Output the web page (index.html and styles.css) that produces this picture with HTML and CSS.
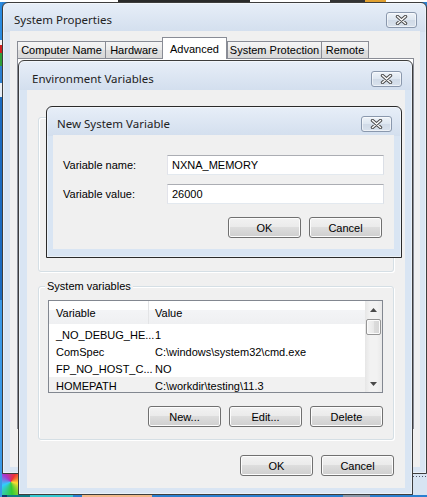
FILE: index.html
```html
<!DOCTYPE html>
<html>
<head>
<meta charset="utf-8">
<title>System Properties</title>
<link rel="stylesheet" href="styles.css">
</head>
<body>
<div class="desktop">

  <div class="win sp">
    <div class="titlebar">
      <span class="title">System Properties</span>
      <span class="close"><svg width="13" height="10" viewBox="0 0 13 10"><path d="M2.5 1.5 L10.5 8.5 M10.5 1.5 L2.5 8.5" stroke="#4a4a4a" stroke-width="3.4" stroke-linecap="round"/><path d="M2.5 1.5 L10.5 8.5 M10.5 1.5 L2.5 8.5" stroke="#fafafa" stroke-width="1.5" stroke-linecap="round"/></svg></span>
    </div>
    <div class="client sp-client">
      <div class="tabs">
        <div class="tab t1">Computer Name</div>
        <div class="tab t2">Hardware</div>
        <div class="tab t3">Advanced</div>
        <div class="tab t4">System Protection</div>
        <div class="tab t5">Remote</div>
      </div>
      <div class="tabpanel"></div>
    </div>
  </div>

  <div class="win ev">
    <div class="titlebar">
      <span class="title">Environment Variables</span>
      <span class="close"><svg width="13" height="10" viewBox="0 0 13 10"><path d="M2.5 1.5 L10.5 8.5 M10.5 1.5 L2.5 8.5" stroke="#4a4a4a" stroke-width="3.4" stroke-linecap="round"/><path d="M2.5 1.5 L10.5 8.5 M10.5 1.5 L2.5 8.5" stroke="#fafafa" stroke-width="1.5" stroke-linecap="round"/></svg></span>
    </div>
    <div class="client ev-client">
      <div class="group user-group"></div>
      <div class="group sys-group">
        <div class="group-label">System variables</div>
        <div class="listview">
          <div class="lv-main">
            <div class="lv-header">
              <div class="c1">Variable</div>
              <div class="c2 hsep">Value</div>
            </div>
            <div class="lv-rows">
              <div class="row"><div class="c1">_NO_DEBUG_HE...</div><div class="c2">1</div></div>
              <div class="row"><div class="c1">ComSpec</div><div class="c2">C:\windows\system32\cmd.exe</div></div>
              <div class="row"><div class="c1">FP_NO_HOST_C...</div><div class="c2">NO</div></div>
              <div class="row hot"><div class="c1">HOMEPATH</div><div class="c2">C:\workdir\testing\11.3</div></div>
            </div>
          </div>
          <div class="vscroll">
            <div class="sb-btn"><svg width="7" height="4" viewBox="0 0 7 4"><path d="M0 4 L3.5 0 L7 4Z" fill="#4a4a4a"/></svg></div>
            <div class="sb-thumb"></div>
            <div class="sb-track"></div>
            <div class="sb-btn"><svg width="7" height="4" viewBox="0 0 7 4"><path d="M0 0 L3.5 4 L7 0Z" fill="#4a4a4a"/></svg></div>
          </div>
        </div>
        <div class="btnrow sys-btns">
          <div class="btn">New...</div>
          <div class="btn">Edit...</div>
          <div class="btn">Delete</div>
        </div>
      </div>
      <div class="btnrow dlg-btns">
        <div class="btn">OK</div>
        <div class="btn">Cancel</div>
      </div>
    </div>
  </div>

  <div class="win nsv">
    <div class="titlebar">
      <span class="title">New System Variable</span>
      <span class="close"><svg width="13" height="10" viewBox="0 0 13 10"><path d="M2.5 1.5 L10.5 8.5 M10.5 1.5 L2.5 8.5" stroke="#4a4a4a" stroke-width="3.4" stroke-linecap="round"/><path d="M2.5 1.5 L10.5 8.5 M10.5 1.5 L2.5 8.5" stroke="#fafafa" stroke-width="1.5" stroke-linecap="round"/></svg></span>
    </div>
    <div class="client nsv-client">
      <div class="field"><span class="flabel">Variable name:</span><div class="input">NXNA_MEMORY</div></div>
      <div class="field"><span class="flabel">Variable value:</span><div class="input">26000</div></div>
      <div class="btnrow nsv-btns">
        <div class="btn">OK</div>
        <div class="btn">Cancel</div>
      </div>
    </div>
  </div>

</div>
</body>
</html>
```

FILE: styles.css
```css
* { box-sizing: border-box; }

body { margin: 0; }

.desktop {
  position: relative;
  width: 427px;
  height: 497px;
  overflow: hidden;
  font-family: "Liberation Sans", Arial, sans-serif;
  font-size: 11px;
  color: #000;
  background:
    linear-gradient(90deg, #fff 0 118px, #2a2a2a 118px 250px, #fff 250px 330px, #333 330px 365px, #e0a030 365px 386px, #fff 386px) 0 0 / 427px 2px no-repeat,
    linear-gradient(#2a8be0 0 40px, #f4f4f4 40px 45px, #d02020 45px 53px, #2e9e3a 53px 66px, #2a7fd0 66px 83px, #e8eef5 83px 97px, #1b6bc0 97px 300px, #3b9ae8 300px 470px) 0 0 / 2px 497px no-repeat,
    linear-gradient(90deg, #15356a 0 7px, #0e7b86 7px 30px, #35c9d2 30px 73px, #2a80d0 73px 82px, #f2b98a 82px 152px, #2a80d0 152px 343px, #8899aa 343px 370px, #2a80d0 370px) 0 495px / 427px 2px no-repeat,
    conic-gradient(from 30deg at 60% 40%, #e33, #fd3, #3c3, #3cf, #a3c, #e33) 0 473px / 18px 22px no-repeat,
    repeating-linear-gradient(90deg, #556 0 1px, transparent 1px 3px) 413px 476px / 14px 1px no-repeat,
    linear-gradient(#d7e4f2, #d7e4f2) 413px 473px / 14px 24px no-repeat,
    #2a80d0;
}

/* windows */
.win {
  position: absolute;
  display: flex;
  flex-direction: column;
  border: 1px solid #3d3d3d;
  border-radius: 6px 6px 0 0;
  background: linear-gradient(to bottom, #e7eef8 0px, #d3dfee 29px, #d9e5f3 29px, #d9e5f3 100%);
  box-shadow: inset 0 0 0 1px rgba(255, 255, 255, 0.45);
}

.sp { left: 2px; top: 2px; width: 425px; height: 472px; padding: 0 6px 6px 7px; }
.ev { left: 18px; top: 60px; width: 395px; height: 435px; padding: 0 7px 6px 8px; }
.nsv { left: 46px; top: 106px; width: 356px; height: 152px; padding: 0 7px 8px 6px; border-color: #2a2a2a; }

.titlebar {
  flex: none;
  display: flex;
  justify-content: space-between;
  align-items: center;
}
.sp .titlebar { height: 28px; padding: 6px 3px 0 4px; }
.ev .titlebar { height: 29px; padding: 7px 3px 0 5px; }
.nsv .titlebar { height: 28px; padding: 6px 2px 0 4px; }

.title {
  font-family: "Noto Sans", "Open Sans", sans-serif;
  font-size: 11.5px;
  line-height: 16px;
  color: #222;
}

.close {
  width: 31px;
  height: 16px;
  border: 1px solid #8a98ad;
  border-radius: 3px;
  background: linear-gradient(#eef3f9, #dde6f0 50%, #d0dae7 51%, #d9e2ed);
  box-shadow: inset 0 0 0 1px rgba(255, 255, 255, 0.55);
  display: flex;
  align-items: center;
  justify-content: center;
}

.client {
  flex: 1;
  min-height: 0;
  background: #f0f0f0;
}

/* System Properties */
.sp-client {
  padding: 6px 6px 0 7px;
  display: flex;
  flex-direction: column;
}

.tabs {
  display: flex;
  align-items: flex-end;
  height: 21px;
  flex: none;
}

.tab {
  height: 17px;
  border: 1px solid #898c95;
  border-bottom: none;
  background: linear-gradient(#f5f5f5, #ebebeb 50%, #dedede 51%, #d9d9d9);
  display: flex;
  align-items: center;
  justify-content: center;
  white-space: nowrap;
}
.t1 { width: 89px; }
.t2 { width: 58px; margin-left: -1px; }
.t3 {
  width: 65px;
  margin-left: -1px;
  height: 22px;
  margin-bottom: -1px;
  background: #fff;
  position: relative;
  z-index: 1;
}
.t4 { width: 95px; }
.t5 { width: 48px; margin-left: -1px; }

.tabpanel {
  height: 371px;
  border: 1px solid #898c95;
  background: #fff;
}

/* Environment Variables */
.ev-client {
  padding: 27px 11px 0 11px;
  display: flex;
  flex-direction: column;
}

.group {
  flex: none;
  border: 1px solid #d5dfe5;
  border-radius: 3px;
  box-shadow: inset 1px 1px 0 #fff, 1px 1px 0 #fff;
}
.user-group { height: 155px; }
.sys-group {
  height: 154px;
  margin-top: 14px;
  padding: 0 10px 0 9px;
  display: flex;
  flex-direction: column;
}

.group-label {
  align-self: flex-start;
  margin-top: -7px;
  margin-left: -3px;
  padding: 0 2px;
  line-height: 13px;
  background: #f0f0f0;
}

.listview {
  margin-top: 7px;
  height: 93px;
  border: 1px solid #828790;
  background: #fff;
  display: flex;
  flex: none;
}

.lv-main {
  flex: 1;
  min-width: 0;
  overflow: hidden;
}

.lv-header {
  display: flex;
  height: 23px;
  background: linear-gradient(#ffffff 0, #ffffff 40%, #f3f4f6 41%, #eff0f2 100%);
}
.lv-header > div {
  display: flex;
  align-items: center;
}
.c1 { width: 99px; padding-left: 7px; white-space: nowrap; }
.c2 { flex: 1; padding-left: 7px; white-space: nowrap; }
.hsep { border-left: 1px solid #e3e4e6; padding-left: 6px; }

.lv-rows { padding-top: 2px; }
.row {
  display: flex;
  height: 17px;
  align-items: center;
}
.row.hot { background: #f1f1f1; }

.vscroll {
  width: 17px;
  flex: none;
  display: flex;
  flex-direction: column;
  background: linear-gradient(90deg, #e6e6e6, #f2f2f2 30%, #f2f2f2 70%, #e9e9e9);
}
.sb-btn {
  height: 17px;
  flex: none;
  display: flex;
  align-items: center;
  justify-content: center;
}
.sb-thumb {
  height: 16px;
  flex: none;
  margin: 1px 1px 0 1px;
  border: 1px solid #959595;
  border-radius: 2px;
  background: linear-gradient(90deg, #f4f4f4, #e8e8e8 50%, #dcdcdc 51%, #d6d6d6);
  box-shadow: inset 0 0 0 1px #fbfbfb;
}
.sb-track { flex: 1; }

.btnrow {
  display: flex;
  justify-content: flex-end;
  gap: 8px;
  flex: none;
}
.sys-btns { margin-top: 13px; }
.dlg-btns { margin-top: 15px; }

.btn {
  width: 73px;
  height: 21px;
  border: 1px solid #707070;
  border-radius: 3px;
  background: linear-gradient(#f2f2f2 0%, #ebebeb 45%, #dddddd 50%, #cfcfcf 100%);
  box-shadow: inset 0 0 0 1px #fcfcfc;
  display: flex;
  align-items: center;
  justify-content: center;
  color: #000;
}

/* New System Variable */
.nsv-client {
  padding: 20px 10px 0 10px;
  display: flex;
  flex-direction: column;
}

.field {
  display: flex;
  align-items: center;
  height: 20px;
  flex: none;
}
.field + .field { margin-top: 9px; }
.flabel { width: 104px; flex: none; }

.input {
  flex: 1;
  height: 20px;
  border: 1px solid;
  border-color: #abadb3 #dbdfe6 #e3e9ef #e2e3ea;
  background: #fff;
  padding-left: 4px;
  display: flex;
  align-items: center;
}

.nsv-btns { margin-top: 13px; padding-right: 2px; }
```
